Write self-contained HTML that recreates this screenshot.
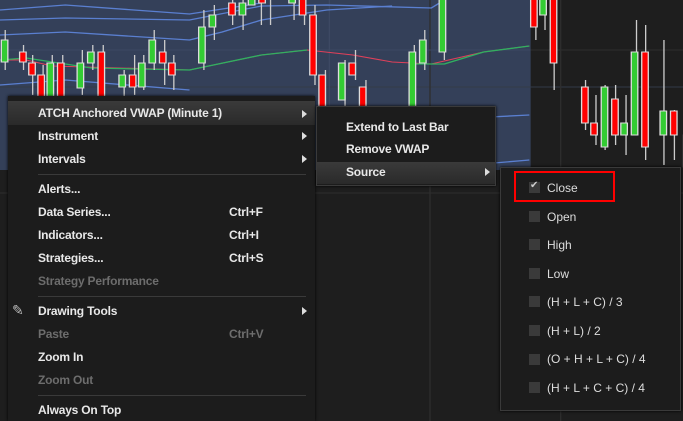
<!DOCTYPE html>
<html><head><style>
body{margin:0;width:683px;height:421px;overflow:hidden;background:#1e1e1e;font-family:"Liberation Sans",Arial,sans-serif;position:relative}
.m{position:absolute;background:#1c1c1c;box-shadow:0 0 3px #000}
.t{position:absolute;font-size:12px;color:#e8e8e8;font-weight:bold;letter-spacing:-0.2px;white-space:nowrap}
.d{color:#6d6d6d}
.s{position:absolute;height:1px;background:#3a3a3a}
.a{position:absolute;width:0;height:0;border-left:5px solid #ddd;border-top:4px solid transparent;border-bottom:4px solid transparent}
.cb{position:absolute;width:11px;height:11px;background:#3a3a3a}
.n{position:absolute;font-size:12px;color:#ddd;white-space:nowrap}
</style></head><body>
<svg width="683" height="421" style="position:absolute;left:0;top:0">
<g transform="scale(1.307,1)">
<rect x="0" y="0" width="406" height="170" fill="#344059"/>
<line x1="0" y1="87" x2="683" y2="87" stroke="#333b48"/>
<line x1="252" y1="0" x2="252" y2="170" stroke="#3d4963"/>
<line x1="329" y1="0" x2="329" y2="421" stroke="#2e2e2e"/>
<line x1="0" y1="50" x2="406" y2="50" stroke="#3d4963"/>
<line x1="406" y1="50" x2="683" y2="50" stroke="#2e2e2e"/>
<line x1="0" y1="193" x2="683" y2="193" stroke="#2e2e2e"/>
<line x1="429" y1="0" x2="429" y2="421" stroke="#2e2e2e"/>
<g fill="none" stroke-width="1.3">
<path d="M0 10 L50 5 L145 14 L200 3" stroke="#5a7fd0"/>
<path d="M0 20 L50 18 L145 20 L200 6 L250 5 L330 8 L340 0" stroke="#5a7fd0"/>
<path d="M0 35 L50 32 L145 40 L170 32 L200 20 L250 10 L300 6" stroke="#5a7fd0"/>
<path d="M0 85 L50 80 L145 90" stroke="#5a7fd0"/>
<path d="M0 60 L20 60 L40 66 L145 70 L200 55 L235 50 L270 55 L300 62 L330 64 L370 52 L405 46" stroke="#e0405a" stroke-width="1"/>
<path d="M0 60 L20 58 L70 68 L145 70 L200 55 L235 50" stroke="#30b060"/>
<path d="M315 64 L340 64 L370 52 L405 46" stroke="#30b060"/>
<path d="M315 118 L360 118 L405 115" stroke="#5a7fd0"/>
<path d="M320 165 L360 165 L405 160" stroke="#5a7fd0"/>
</g>
<g stroke="#ccc" stroke-width="1">
<path d="M4 30V70M18 45V70M25 55V95M33 65V110M40 55V110M48 55V110M63 50V95M71 45V70M79 45V110M95 70V100M103 55V95M110 55V90M118 30V70M126 40V85M133 55V90M156 10V70M164 5V40M178 0V25M186 0V30M200 0V25M207 0V25M225 0V20M233 0V25M241 5V85M249 70V120M264 60V110M272 50V80M280 80V115M317 45V115M325 30V70M340 0V60M410 0V40M417 0V30M424 0V90M448 80V130M456 95V145M463 85V150M471 85V145M479 95V155M487 20V135M494 25V160M508 40V165M516 110V160M526 125V170M534 140V170M543 100V175"/>
</g>
<g stroke="#ddd" stroke-width="1">
<rect x="1" y="40" width="5" height="22" fill="#3c3"/><rect x="15" y="52" width="5" height="10" fill="#f00"/><rect x="22" y="63" width="5" height="12" fill="#f00"/><rect x="29" y="75" width="5" height="25" fill="#f00"/><rect x="36" y="63" width="5" height="37" fill="#3c3"/><rect x="44" y="63" width="5" height="37" fill="#f00"/><rect x="59" y="63" width="5" height="25" fill="#3c3"/><rect x="67" y="52" width="5" height="11" fill="#3c3"/><rect x="75" y="52" width="5" height="48" fill="#f00"/><rect x="91" y="75" width="5" height="12" fill="#3c3"/><rect x="99" y="75" width="5" height="12" fill="#f00"/><rect x="106" y="63" width="5" height="24" fill="#3c3"/><rect x="114" y="40" width="5" height="23" fill="#3c3"/><rect x="122" y="52" width="5" height="11" fill="#f00"/><rect x="129" y="63" width="5" height="12" fill="#f00"/><rect x="152" y="27" width="5" height="36" fill="#3c3"/><rect x="160" y="15" width="5" height="12" fill="#3c3"/><rect x="175" y="3" width="5" height="12" fill="#f00"/><rect x="183" y="3" width="5" height="12" fill="#3c3"/><rect x="190" y="-2" width="5" height="7" fill="#3c3"/><rect x="198" y="-2" width="5" height="5" fill="#f00"/><rect x="221" y="-2" width="5" height="5" fill="#3c3"/><rect x="229" y="-2" width="5" height="17" fill="#f00"/><rect x="237" y="15" width="5" height="60" fill="#f00"/><rect x="244" y="75" width="5" height="35" fill="#f00"/><rect x="259" y="63" width="5" height="37" fill="#3c3"/><rect x="267" y="63" width="5" height="12" fill="#f00"/><rect x="275" y="87" width="5" height="23" fill="#f00"/><rect x="313" y="52" width="5" height="58" fill="#3c3"/><rect x="321" y="40" width="5" height="23" fill="#3c3"/><rect x="336" y="-2" width="5" height="54" fill="#3c3"/><rect x="406" y="-2" width="5" height="29" fill="#f00"/><rect x="413" y="-2" width="5" height="17" fill="#3c3"/><rect x="421" y="-2" width="5" height="65" fill="#f00"/><rect x="445" y="87" width="5" height="36" fill="#f00"/><rect x="452" y="123" width="5" height="12" fill="#f00"/><rect x="460" y="87" width="5" height="60" fill="#3c3"/><rect x="468" y="99" width="5" height="36" fill="#f00"/><rect x="475" y="123" width="5" height="12" fill="#3c3"/><rect x="483" y="52" width="5" height="83" fill="#3c3"/><rect x="491" y="52" width="5" height="95" fill="#f00"/><rect x="505" y="111" width="5" height="24" fill="#3c3"/><rect x="513" y="111" width="5" height="24" fill="#f00"/><rect x="523" y="135" width="5" height="32" fill="#f00"/><rect x="531" y="158" width="5" height="9" fill="#3c3"/><rect x="541" y="147" width="5" height="23" fill="#3c3"/>
</g>
</g>
</svg>

<div class="m" style="left:8px;top:96px;width:307px;height:325px"></div>
<div style="position:absolute;left:8px;top:101px;width:307px;height:24px;background:linear-gradient(#3a3a3a,#2a2a2a)"></div>
<div class="t" style="left:38px;top:106px">ATCH Anchored VWAP (Minute 1)</div><div class="a" style="left:302px;top:110px"></div>
<div class="t" style="left:38px;top:129px">Instrument</div><div class="a" style="left:302px;top:132px"></div>
<div class="t" style="left:38px;top:152px">Intervals</div><div class="a" style="left:302px;top:155px"></div>
<div class="s" style="left:38px;top:174px;width:268px"></div>
<div class="t" style="left:38px;top:182px">Alerts...</div>
<div class="t" style="left:38px;top:205px">Data Series...</div><div class="t" style="left:229px;top:205px">Ctrl+F</div>
<div class="t" style="left:38px;top:228px">Indicators...</div><div class="t" style="left:229px;top:228px">Ctrl+I</div>
<div class="t" style="left:38px;top:251px">Strategies...</div><div class="t" style="left:229px;top:251px">Ctrl+S</div>
<div class="t d" style="left:38px;top:274px">Strategy Performance</div>
<div class="s" style="left:38px;top:296px;width:268px"></div>
<div class="n" style="left:12px;top:302px;font-size:14px;color:#bbb">✎</div>
<div class="t" style="left:38px;top:304px">Drawing Tools</div><div class="a" style="left:302px;top:307px"></div>
<div class="t d" style="left:38px;top:327px">Paste</div><div class="t d" style="left:229px;top:327px">Ctrl+V</div>
<div class="t" style="left:38px;top:350px">Zoom In</div>
<div class="t d" style="left:38px;top:373px">Zoom Out</div>
<div class="s" style="left:38px;top:395px;width:268px"></div>
<div class="t" style="left:38px;top:403px">Always On Top</div>

<div class="m" style="left:316px;top:106px;width:180px;height:80px;border:1px solid #3a3a3a;box-sizing:border-box"></div>
<div style="position:absolute;left:317px;top:162px;width:178px;height:22px;background:linear-gradient(#3a3a3a,#2a2a2a)"></div>
<div class="t" style="left:346px;top:120px">Extend to Last Bar</div>
<div class="t" style="left:346px;top:142px">Remove VWAP</div>
<div class="t" style="left:346px;top:165px">Source</div><div class="a" style="left:485px;top:168px"></div>

<div class="m" style="left:500px;top:167px;width:181px;height:244px;border:1px solid #3a3a3a;box-sizing:border-box"></div>
<div style="position:absolute;left:514px;top:171px;width:97px;height:27px;border:2px solid #f00"></div>
<div class="cb" style="left:529px;top:182px"></div><div class="n" style="left:530px;top:180px;font-size:10px;color:#ccc">✔</div><div class="n" style="left:547px;top:181px">Close</div>
<div class="cb" style="left:529px;top:211px"></div><div class="n" style="left:547px;top:210px">Open</div>
<div class="cb" style="left:529px;top:239px"></div><div class="n" style="left:547px;top:238px">High</div>
<div class="cb" style="left:529px;top:268px"></div><div class="n" style="left:547px;top:267px">Low</div>
<div class="cb" style="left:529px;top:296px"></div><div class="n" style="left:547px;top:295px">(H + L + C) / 3</div>
<div class="cb" style="left:529px;top:325px"></div><div class="n" style="left:547px;top:324px">(H + L) / 2</div>
<div class="cb" style="left:529px;top:354px"></div><div class="n" style="left:547px;top:352px">(O + H + L + C) / 4</div>
<div class="cb" style="left:529px;top:382px"></div><div class="n" style="left:547px;top:381px">(H + L + C + C) / 4</div>
</body></html>
